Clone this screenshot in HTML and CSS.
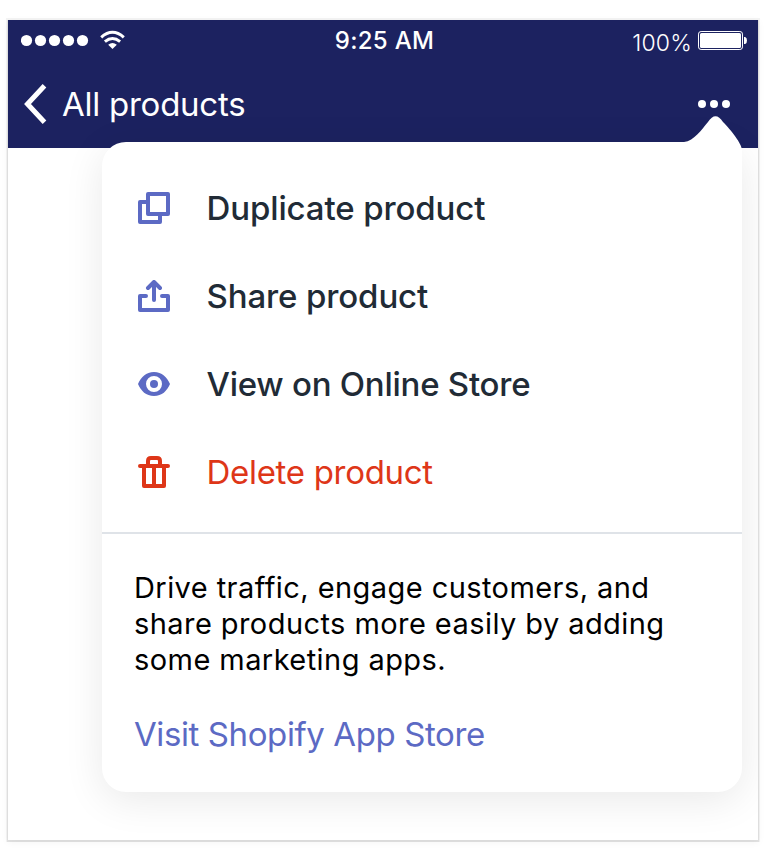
FILE: index.html
```html
<!DOCTYPE html>
<html lang="en">
<head>
<meta charset="utf-8">
<title>All products</title>
<link rel="stylesheet" href="styles.css">
</head>
<body>
<main class="screen">
  <header class="header">
    <div class="status">
      <div class="signal">
        <svg width="104" height="20" viewBox="0 0 104 20" fill="#fff">
          <circle cx="5.5" cy="10.5" r="5.6"/><circle cx="19.5" cy="10.5" r="5.6"/><circle cx="33.5" cy="10.5" r="5.6"/><circle cx="47.5" cy="10.5" r="5.6"/><circle cx="61.5" cy="10.5" r="5.6"/>
          <path d="M91.5 19 L87.2 14.7 Q91.5 11.2 95.8 14.7Z"/>
          <path d="M83.9 11.6Q91.5 5.4 99.1 11.6M80.2 7.3Q91.5-2.7 102.8 7.3" fill="none" stroke="#fff" stroke-width="3"/>
        </svg>
      </div>
      <div class="time">9:25 AM</div>
      <div class="battery">
        <span class="percent">100%</span>
        <svg width="49" height="19" viewBox="0 0 49 19">
          <rect x=".5" y=".5" width="44" height="18" rx="2.6" fill="none" stroke="#fff"/>
          <rect x="2" y="2" width="41" height="15" rx="1.5" fill="#fff"/>
          <path d="M46 6h1.2Q49 6.5 49 9.5T47.2 13H46Z" fill="#fff"/>
        </svg>
      </div>
    </div>
    <nav class="nav">
      <svg class="back" width="24" height="42" viewBox="0 0 24 42" fill="none" stroke="#fff" stroke-width="5"><path d="M21.5 2.8 4.5 21l17 18.2"/></svg>
      <span class="title">All products</span>
      <svg class="more" width="32" height="8" viewBox="0 0 32 8" fill="#fff"><circle cx="4" cy="4" r="4"/><circle cx="16" cy="4" r="4"/><circle cx="28" cy="4" r="4"/></svg>
    </nav>
  </header>
  <section class="popover">
    <svg class="tip" width="58" height="54" viewBox="0 0 58 54" fill="#fff"><path d="M0 26C10 25 18 13 24 6Q31.5-5.500 39 6C47 14 58 28 58 34V54H0Z"/></svg>
    <ul class="menu">
      <li class="item">
        <svg class="icon" viewBox="0 0 32 32" fill="none" stroke="currentColor" stroke-width="4" stroke-linejoin="round"><path d="M10 2h20v20H10ZM10 10H2v20h20v-8"/></svg>
        <span class="label duplicate">Duplicate product</span>
      </li>
      <li class="item">
        <svg class="icon" viewBox="0 0 32 32" fill="none" stroke="currentColor" stroke-width="4" stroke-linecap="round" stroke-linejoin="round"><path d="M8 16H2v14h28V16h-6M16 20V3M10 8l6-6 6 6"/></svg>
        <span class="label share">Share product</span>
      </li>
      <li class="item">
        <svg class="icon" viewBox="0 0 32 32"><path fill="currentColor" fill-rule="evenodd" d="M16 4C24 4 29 9 32 16 29 23 24 28 16 28S3 23 0 16C3 9 8 4 16 4Zm0 4a8 8 0 1 0 0 16 8 8 0 0 0 0-16Z"/><circle cx="16" cy="16" r="4" fill="currentColor"/></svg>
        <span class="label view">View on Online Store</span>
      </li>
      <li class="item danger">
        <svg class="icon" viewBox="0 0 32 32" fill="none" stroke="currentColor" stroke-width="4" stroke-linecap="round" stroke-linejoin="round"><path d="M2 10h28M10 9V5q0-3 3-3h6q3 0 3 3v4M6 10v20h20V10M16 10v20"/></svg>
        <span class="label delete">Delete product</span>
      </li>
    </ul>
    <div class="promo">
      <p class="text">Drive traffic, engage customers, and<br>share products more easily by adding<br>some marketing apps.</p>
      <a class="link">Visit Shopify App Store</a>
    </div>
  </section>
</main>
</body>
</html>
```
FILE: styles.css
```css
* { box-sizing: border-box; }
body { margin: 0; padding: 20px 8px 24px; background: #fff; font-family: Inter, "Liberation Sans", sans-serif; }
svg { display: block; }
.screen { position: relative; width: 750px; height: 820px; background: #fff; box-shadow: 0 1px 0 1px rgba(0,0,0,.07), 0 0 0 2px rgba(0,0,0,.045), 0 2px 8px rgba(0,0,0,.05); }
.header { height: 128px; background: #1c2260; color: #fff; }
.status { display: grid; grid-template: 36px / 1fr auto 1fr; align-items: center; height: 40px; padding: 4px 11px 0 13px; }
.signal { margin-top: -5px; }
.time { font-size: 24px; font-weight: 500; letter-spacing: .3px; line-height: 36px; margin-top: -2px; padding-left: 1px; }
.battery { display: flex; align-items: center; justify-content: flex-end; gap: 6px; margin-top: -4px; }
.percent { font-size: 23px; font-weight: 300; letter-spacing: .2px; line-height: 36px; padding-top: 5px; }
.nav { display: flex; align-items: center; height: 88px; padding: 0 28px 0 15px; }
.title { margin-left: 15px; font-size: 33px; font-weight: 400; letter-spacing: -.25px; white-space: nowrap; }
.more { margin-left: auto; }
.popover { position: absolute; left: 94px; top: 122px; width: 640px; height: 650px; border-radius: 24px; background: #fff; box-shadow: 0 8px 40px rgba(0,0,0,.09); clip-path: inset(-50px -16px -48px -80px); }
.tip { position: absolute; right: 0; top: -26px; }
.menu { list-style: none; margin: 0; padding: 22px 36px 16px; height: 390px; }
.item { display: flex; align-items: center; gap: 37px; height: 88px; color: #5c6ac4; }
.icon { width: 32px; height: 32px; flex: none; }
.label { margin-left: -.5px; color: #212b36; font-size: 33px; font-weight: 500; white-space: nowrap; }
.duplicate, .share { letter-spacing: -.12px; }
.view { letter-spacing: -.25px; }
.delete { letter-spacing: -.3px; }
.danger, .danger .label { color: #de3618; }
.danger .label { font-weight: 400; }
.promo { border-top: 2px solid #dfe3e8; padding: 36px 32px; }
.text { margin: 0; font-size: 29px; line-height: 36px; letter-spacing: .43px; color: #000; white-space: nowrap; }
.link { display: block; margin-top: 34px; font-size: 33px; line-height: 44px; letter-spacing: -.4px; color: #5c6ac4; white-space: nowrap; }
```
